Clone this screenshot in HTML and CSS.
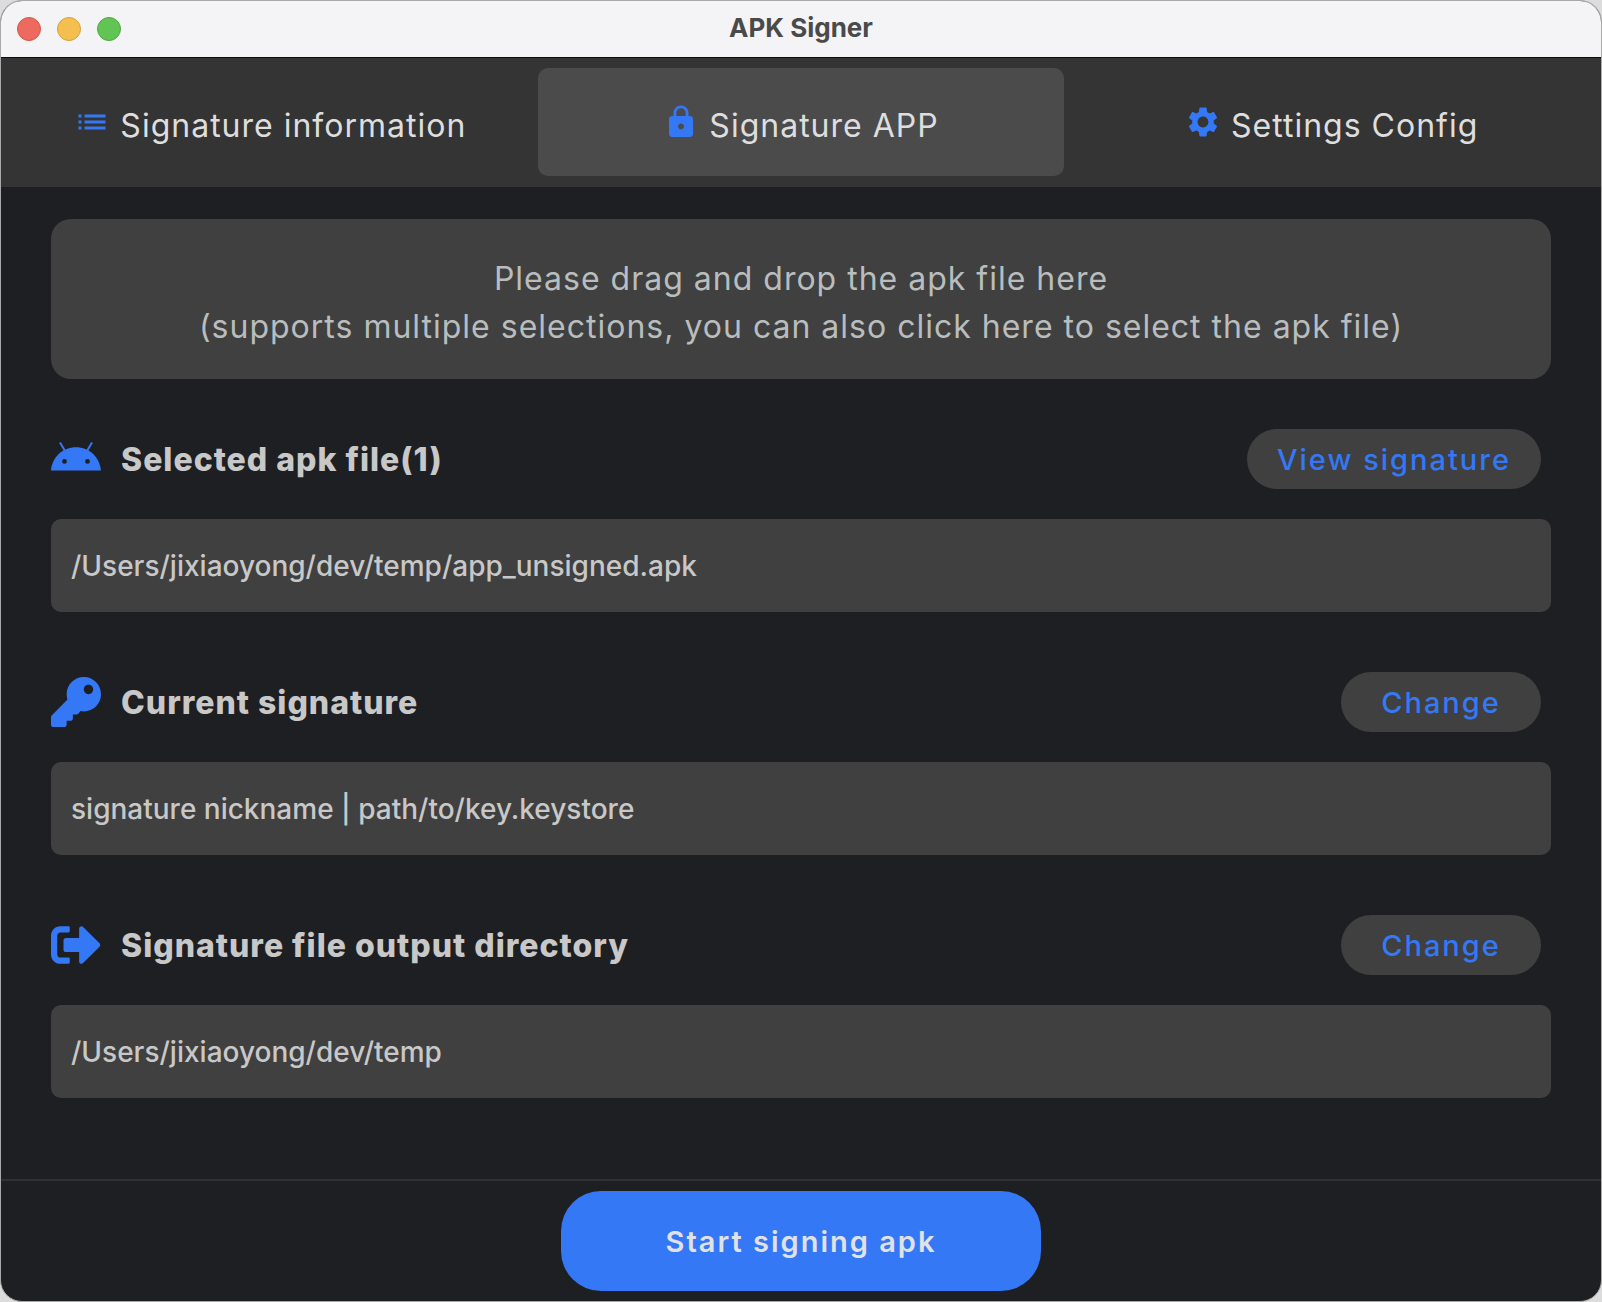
FILE: index.html
```html
<!DOCTYPE html>
<html lang="en">
<head>
<meta charset="utf-8">
<meta name="viewport" content="width=device-width, initial-scale=1">
<title>APK Signer</title>
<link rel="stylesheet" href="styles.css">
</head>
<body>
<div class="window">
  <header class="titlebar">
    <div class="lights">
      <button class="light light-close" type="button" aria-label="Close"></button>
      <button class="light light-minimize" type="button" aria-label="Minimize"></button>
      <button class="light light-zoom" type="button" aria-label="Zoom"></button>
    </div>
    <h1 class="title">APK Signer</h1>
  </header>

  <nav class="tabs">
    <button class="tab" type="button">
      <svg class="tab-icon" viewBox="0 0 24 24" aria-hidden="true"><path d="M3 13h2v-2H3v2zm0 4h2v-2H3v2zm0-8h2V7H3v2zm4 4h14v-2H7v2zm0 4h14v-2H7v2zM7 7v2h14V7H7z"/></svg>
      <span class="tab-label">Signature information</span>
    </button>
    <button class="tab tab-active" type="button" aria-current="page">
      <svg class="tab-icon" viewBox="0 0 24 24" aria-hidden="true"><path d="M18 8h-1V6c0-2.76-2.24-5-5-5S7 3.24 7 6v2H6c-1.1 0-2 .9-2 2v10c0 1.1.9 2 2 2h12c1.1 0 2-.9 2-2V10c0-1.1-.9-2-2-2zm-6 9c-1.1 0-2-.9-2-2s.9-2 2-2 2 .9 2 2-.9 2-2 2zm3.1-9H8.9V6c0-1.71 1.39-3.1 3.1-3.1 1.71 0 3.1 1.39 3.1 3.1v2z"/></svg>
      <span class="tab-label">Signature APP</span>
    </button>
    <button class="tab" type="button">
      <svg class="tab-icon" viewBox="0 0 24 24" aria-hidden="true"><path d="M19.14 12.94c.04-.3.06-.61.06-.94 0-.32-.02-.64-.07-.94l2.03-1.58c.18-.14.23-.41.12-.61l-1.92-3.32c-.12-.22-.37-.29-.59-.22l-2.39.96c-.5-.38-1.03-.7-1.62-.94L14.4 2.81c-.04-.24-.24-.41-.48-.41h-3.84c-.24 0-.43.17-.47.41L9.25 5.35C8.66 5.59 8.12 5.92 7.63 6.29L5.24 5.33c-.22-.08-.47 0-.59.22L2.74 8.87c-.12.21-.08.47.12.61l2.03 1.58c-.05.3-.09.63-.09.94s.02.64.07.94l-2.03 1.58c-.18.14-.23.41-.12.61l1.92 3.32c.12.22.37.29.59.22l2.39-.96c.5.38 1.03.7 1.62.94l.36 2.54c.05.24.24.41.48.41h3.84c.24 0 .44-.17.47-.41l.36-2.54c.59-.24 1.13-.56 1.62-.94l2.39.96c.22.08.47 0 .59-.22l1.92-3.32c.12-.22.07-.47-.12-.61l-2.01-1.58zM12 15.6c-1.98 0-3.6-1.62-3.6-3.6s1.62-3.6 3.6-3.6 3.6 1.62 3.6 3.6-1.62 3.6-3.6 3.6z"/></svg>
      <span class="tab-label">Settings Config</span>
    </button>
  </nav>

  <main class="content">
    <button class="dropzone" type="button">
      <span class="dropzone-line">Please drag and drop the apk file here</span>
      <span class="dropzone-line">(supports multiple selections, you can also click here to select the apk file)</span>
    </button>

    <section class="group">
      <div class="group-head">
        <svg class="group-icon" viewBox="0 0 50 50" aria-hidden="true"><path fill-rule="evenodd" d="M0 36.500C1 23 12 13.200 25 13.200S49 23 50 36.500ZM13.500 25a2.400 2.400 0 1 0 0 4.800a2.400 2.400 0 0 0 0-4.800ZM36.500 25a2.400 2.400 0 1 0 0 4.800a2.400 2.400 0 0 0 0-4.800Z"/><path class="antenna" d="M9 8.500L14 17M41 8.500L36 17"/></svg>
        <h2 class="group-title">Selected apk file(1)</h2>
        <button class="pill" type="button">View signature</button>
      </div>
      <p class="value">/Users/jixiaoyong/dev/temp/app_unsigned.apk</p>
    </section>

    <section class="group">
      <div class="group-head">
        <svg class="group-icon" viewBox="0 0 512 512" aria-hidden="true"><path d="M512 176.001C512 273.203 433.202 352 336 352c-11.220 0-22.190-1.062-32.827-3.069l-24.012 27.014A23.999 23.999 0 0 1 261.223 384H224v40c0 13.255-10.745 24-24 24h-40v40c0 13.255-10.745 24-24 24H24c-13.255 0-24-10.745-24-24v-78.059c0-6.365 2.529-12.470 7.029-16.971l161.802-161.802C163.108 213.814 160 195.271 160 176 160 78.798 238.797.001 335.999 0 433.488-.001 512 78.511 512 176.001zM336 128c0 26.510 21.490 48 48 48s48-21.490 48-48-21.490-48-48-48-48 21.490-48 48z"/></svg>
        <h2 class="group-title">Current signature</h2>
        <button class="pill" type="button">Change</button>
      </div>
      <p class="value">signature nickname | path/to/key.keystore</p>
    </section>

    <section class="group">
      <div class="group-head">
        <svg class="group-icon" viewBox="0 0 512 512" aria-hidden="true"><path d="M497 273L329 441c-15 15-41 4.500-41-17v-96H152c-13.300 0-24-10.700-24-24v-96c0-13.300 10.700-24 24-24h136V88c0-21.400 25.900-32 41-17l168 168c9.300 9.400 9.300 24.600 0 34zM192 436v-40c0-6.600-5.400-12-12-12H96c-17.700 0-32-14.300-32-32V160c0-17.700 14.300-32 32-32h84c6.600 0 12-5.400 12-12V76c0-6.600-5.400-12-12-12H96c-53 0-96 43-96 96v192c0 53 43 96 96 96h84c6.600 0 12-5.400 12-12z"/></svg>
        <h2 class="group-title">Signature file output directory</h2>
        <button class="pill" type="button">Change</button>
      </div>
      <p class="value">/Users/jixiaoyong/dev/temp</p>
    </section>
  </main>

  <footer class="actions">
    <button class="start" type="button">Start signing apk</button>
  </footer>
</div>
</body>
</html>
```

FILE: styles.css
```css
:root {
  --accent: #3478f6;
  --surface: #404040;
  --page: #1e1f23;
  --text: #c8c8c8;
}

* {
  box-sizing: border-box;
}

body {
  margin: 0;
  background: #dcdcdc;
  font-family: Inter, "Liberation Sans", sans-serif;
  color: var(--text);
}

button {
  border: 0;
  padding: 0;
  font: inherit;
  color: inherit;
  cursor: pointer;
}

.window {
  display: flex;
  flex-direction: column;
  min-height: 100vh;
  border: 1px solid #a9a9a9;
  border-radius: 22px;
  background: var(--page);
  overflow: hidden;
}

.titlebar {
  display: grid;
  grid-template-columns: 1fr auto 1fr;
  align-items: center;
  height: 56px;
  padding: 0 16px;
  background: #f4f4f6;
}

.lights {
  display: flex;
  gap: 16px;
}

.light {
  width: 24px;
  height: 24px;
  border: 1px solid;
  border-radius: 50%;
}

.light-close {
  background: #ed6a5e;
  border-color: #d2574c;
}

.light-minimize {
  background: #f5bf4f;
  border-color: #d6a13d;
}

.light-zoom {
  background: #61c554;
  border-color: #50a73f;
}

.title {
  margin: 0;
  padding-bottom: 2px;
  font-size: 26px;
  line-height: 32px;
  font-weight: 700;
  color: #4a4a4a;
}

.tabs {
  display: flex;
  gap: 4px;
  padding: 10px 6px 11px;
  border-top: 1px solid #0c0c0c;
  background: #343434;
}

.tab {
  flex: 1 1 0;
  display: flex;
  align-items: center;
  justify-content: center;
  gap: 10px;
  height: 108px;
  border-radius: 10px;
  background: transparent;
  color: #dedede;
}

.tab-active {
  background: #4b4b4b;
}

.tab-icon {
  flex: none;
  width: 36px;
  height: 36px;
  fill: var(--accent);
}

.tab-label {
  padding-top: 8px;
  font-size: 32px;
  line-height: 48px;
  letter-spacing: 1px;
}

.content {
  flex: 1;
  padding: 32px 50px 50px;
}

.dropzone {
  display: block;
  width: 100%;
  padding: 36px 20px 28px;
  border-radius: 20px;
  background: var(--surface);
  color: #b9bdbd;
  font-size: 32px;
  line-height: 48px;
  letter-spacing: 1px;
  text-align: center;
}

.dropzone-line {
  display: block;
}

.group {
  margin-top: 60px;
}

.dropzone + .group {
  margin-top: 50px;
}

.group-head {
  display: flex;
  align-items: center;
  gap: 20px;
  padding-right: 10px;
}

.group-icon {
  flex: none;
  width: 50px;
  height: 50px;
  fill: var(--accent);
}

.antenna {
  fill: none;
  stroke: var(--accent);
  stroke-width: 2;
}

.group-title {
  flex: 1;
  margin: 0;
  padding-top: 2px;
  font-size: 32px;
  line-height: 40px;
  font-weight: 800;
  letter-spacing: 1px;
}

.pill {
  min-width: 200px;
  height: 60px;
  padding: 0 30px;
  border-radius: 30px;
  background: var(--surface);
  color: var(--accent);
  font-size: 29px;
  font-weight: 500;
  letter-spacing: 2px;
}

.value {
  margin: 30px 0 0;
  padding: 30px 20px 29px;
  border-radius: 10px;
  background: var(--surface);
  font-size: 28px;
  line-height: 34px;
  font-weight: 500;
}

.actions {
  display: flex;
  justify-content: center;
  padding: 10px;
  border-top: 2px solid #303136;
}

.start {
  width: 480px;
  max-width: 100%;
  height: 100px;
  border-radius: 40px;
  background: var(--accent);
  color: #e0e2e6;
  font-size: 29px;
  font-weight: 600;
  letter-spacing: 2px;
}
```
